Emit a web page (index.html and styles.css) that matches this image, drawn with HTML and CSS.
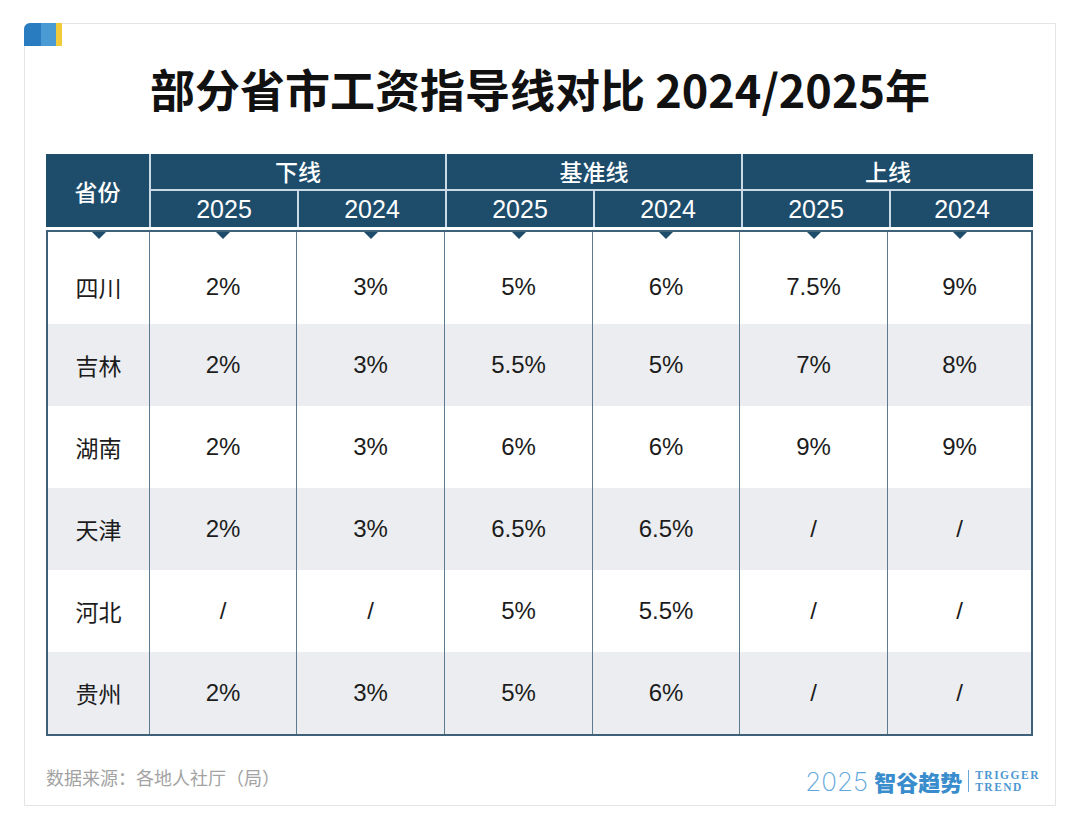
FILE: index.html
```html
<!DOCTYPE html>
<html lang="zh-CN">
<head>
<meta charset="utf-8">
<link rel="stylesheet" href="styles.css">
</head>
<body>
<div class="card">
  <div class="tab"><span class="t1"></span><span class="t2"></span><span class="t3"></span></div>
  <h1 class="title">部分省市工资指导线对比 2024/2025年</h1>
  <div class="thead">
    <div class="hc prov">省份</div>
    <div class="hc grp g1">下线</div>
    <div class="hc grp g2">基准线</div>
    <div class="hc grp g3">上线</div>
    <div class="hc yr">2025</div><div class="hc yr">2024</div>
    <div class="hc yr">2025</div><div class="hc yr">2024</div>
    <div class="hc yr">2025</div><div class="hc yr">2024</div>
  </div>
  <div class="tbody">
    <div class="row first"><div class="c">四川</div><div class="c">2%</div><div class="c">3%</div><div class="c">5%</div><div class="c">6%</div><div class="c">7.5%</div><div class="c">9%</div></div>
    <div class="row alt"><div class="c">吉林</div><div class="c">2%</div><div class="c">3%</div><div class="c">5.5%</div><div class="c">5%</div><div class="c">7%</div><div class="c">8%</div></div>
    <div class="row"><div class="c">湖南</div><div class="c">2%</div><div class="c">3%</div><div class="c">6%</div><div class="c">6%</div><div class="c">9%</div><div class="c">9%</div></div>
    <div class="row alt"><div class="c">天津</div><div class="c">2%</div><div class="c">3%</div><div class="c">6.5%</div><div class="c">6.5%</div><div class="c">/</div><div class="c">/</div></div>
    <div class="row"><div class="c">河北</div><div class="c">/</div><div class="c">/</div><div class="c">5%</div><div class="c">5.5%</div><div class="c">/</div><div class="c">/</div></div>
    <div class="row alt last"><div class="c">贵州</div><div class="c">2%</div><div class="c">3%</div><div class="c">5%</div><div class="c">6%</div><div class="c">/</div><div class="c">/</div></div>
  </div>
  <div class="footer">
    <div class="source">数据来源：各地人社厅（局）</div>
    <div class="logo">
      <span class="lyear">2025</span>
      <span class="lname">智谷趋势</span>
      <span class="ldiv"></span>
      <span class="len"><span>TRIGGER</span><span>TREND</span></span>
    </div>
  </div>
</div>
</body>
</html>
```

FILE: styles.css
```css
html, body {
  margin: 0;
  padding: 0;
  background: #ffffff;
}
body {
  font-family: "Liberation Sans", "Noto Sans CJK SC", sans-serif;
  padding: 23px 0 0 24px;
}
.card {
  position: relative;
  width: 1032px;
  height: 783px;
  border: 1px solid #e4e4e4;
  border-radius: 6px 0 0 0;
  box-sizing: border-box;
  padding: 0 21px 0 21px;
  display: flex;
  flex-direction: column;
}
.tab {
  position: absolute;
  left: -1px;
  top: -1px;
  display: flex;
  height: 23px;
  border-radius: 6px 0 0 0;
  overflow: hidden;
}
.t1 { width: 17px; background: #2a7cc0; }
.t2 { width: 15px; background: #4a9ad4; }
.t3 { width: 6px; background: #f2cb3b; }
.title {
  margin: 37px 0 0 0;
  height: 93px;
  text-align: center;
  font-family: "Noto Sans CJK SC", sans-serif;
  font-weight: 700;
  font-size: 45px;
  line-height: 56px;
  color: #111;
}
.thead {
  display: grid;
  grid-template-columns: 103px 146px 146px 146px 146px 146px 1fr;
  grid-template-rows: 35px 36px;
  gap: 2px;
  background: #c9d9e6;
  width: 987px;
}
.hc {
  background: #1e4d6c;
  color: #ffffff;
  display: flex;
  align-items: center;
  justify-content: center;
  font-family: "Noto Sans CJK SC", sans-serif;
  font-size: 23px;
  font-weight: 500;
}
.prov { grid-row: 1 / span 2; grid-column: 1; }
.g1 { grid-column: 2 / span 2; }
.g2 { grid-column: 4 / span 2; }
.g3 { grid-column: 6 / span 2; }
.grp { padding-bottom: 2px; }
.yr {
  font-family: "Liberation Sans", sans-serif;
  font-weight: 400;
  font-size: 25px;
  padding-top: 0;
}
.tbody {
  margin-top: 3px;
  width: 987px;
  box-sizing: border-box;
  border: 2px solid #3f6079;
}
.row {
  display: grid;
  grid-template-columns: 102px 147px 148px 148px 147px 148px 1fr;
  height: 82px;
}
.row.first { height: 92px; }
.row.alt { background: #ebedf0; }
.c {
  position: relative;
  display: flex;
  align-items: center;
  justify-content: center;
  font-size: 24px;
  color: #1c1c1c;
  border-right: 1px solid #5c7b91;
  font-family: "Liberation Sans", "Noto Sans CJK SC", sans-serif;
}
.c:first-child { font-family: "Noto Sans CJK SC", sans-serif; font-size: 23px; }
.c:last-child { border-right: none; }
.row.first .c { padding-top: 18px; }
.row.first .c::before {
  content: "";
  position: absolute;
  top: 0;
  left: 50%;
  margin-left: -7px;
  border-left: 7px solid transparent;
  border-right: 7px solid transparent;
  border-top: 7px solid #1e4d6c;
}
.footer {
  display: flex;
  justify-content: space-between;
  align-items: center;
  margin-top: 21px;
}
.source {
  font-family: "Noto Sans CJK SC", sans-serif;
  font-size: 18px;
  color: #a3a3a3;
}
.logo {
  display: flex;
  align-items: center;
  margin-right: -6px;
  margin-top: 8px;
}
.lyear {
  font-family: "Inter", sans-serif;
  font-weight: 200;
  font-size: 26px;
  color: #5ea7dc;
}
.lname {
  font-family: "Noto Sans CJK SC", sans-serif;
  font-weight: 900;
  font-size: 22px;
  color: #3a8dcd;
  margin-left: 6px;
}
.ldiv {
  width: 1px;
  height: 22px;
  background: #6aa8d8;
  margin: 0 6px 0 6px;
}
.len {
  display: flex;
  flex-direction: column;
  font-family: "Liberation Serif", serif;
  font-weight: 700;
  font-size: 11.5px;
  line-height: 12px;
  letter-spacing: 1.5px;
  color: #4d97d2;
}
```
